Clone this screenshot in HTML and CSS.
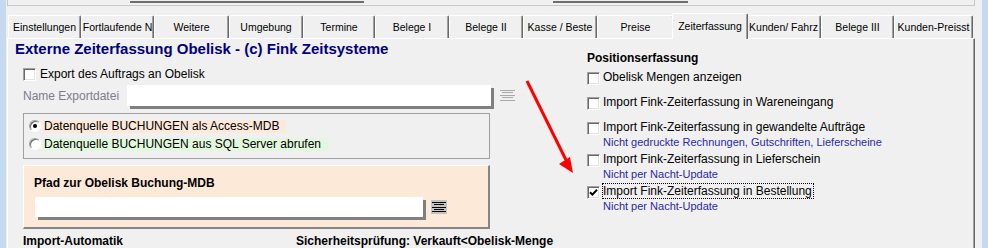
FILE: index.html
```html
<!DOCTYPE html>
<html lang="de">
<head>
    <meta charset="UTF-8">
    <title>Einstellungen - Zeiterfassung</title>
    <link rel="stylesheet" href="styles.css">
</head>
<body>

<div class="app">
    <!-- Reste der Felder oberhalb der Reiter -->
    <div class="topbar">
        <div class="topframe">
            <span class="shadow-bar bar-one"></span>
            <span class="shadow-bar bar-two"></span>
        </div>
    </div>

    <!-- Reiter -->
    <div class="tabs">
        <div class="tab">Einstellungen</div>
        <div class="tab">Fortlaufende N</div>
        <div class="tab">Weitere</div>
        <div class="tab">Umgebung</div>
        <div class="tab">Termine</div>
        <div class="tab">Belege I</div>
        <div class="tab">Belege II</div>
        <div class="tab">Kasse / Beste</div>
        <div class="tab">Preise</div>
        <div class="tab active">Zeiterfassung</div>
        <div class="tab">Kunden/ Fahrz</div>
        <div class="tab">Belege III</div>
        <div class="tab">Kunden-Preisst</div>
    </div>

    <div class="panel">
        <!-- linke Spalte -->
        <div class="left">
            <h1 class="title">Externe Zeiterfassung Obelisk - (c) Fink Zeitsysteme</h1>

            <div class="check-row">
                <span class="check"></span>
                <span>Export des Auftrags an Obelisk</span>
            </div>

            <div class="field-row">
                <span class="field-label">Name Exportdatei</span>
                <span class="field export-field"></span>
                <svg class="list-icon" width="15" height="14" viewBox="0 0 15 14" shape-rendering="crispEdges">
                    <g stroke="#a9a9a9" stroke-width="1">
                        <line x1="0" y1="2.5" x2="15" y2="2.5"/>
                        <line x1="2" y1="4.5" x2="13" y2="4.5"/>
                        <line x1="0" y1="7.5" x2="15" y2="7.5"/>
                        <line x1="2" y1="9.5" x2="13" y2="9.5"/>
                        <line x1="0" y1="12.5" x2="15" y2="12.5"/>
                    </g>
                </svg>
            </div>

            <div class="group">
                <div class="radio-row">
                    <span class="radio checked"></span>
                    <span class="radio-label peach">Datenquelle BUCHUNGEN als Access-MDB</span>
                </div>
                <div class="radio-row">
                    <span class="radio"></span>
                    <span class="radio-label green">Datenquelle BUCHUNGEN aus SQL Server abrufen</span>
                </div>
            </div>

            <div class="path-box">
                <div class="path-title">Pfad zur Obelisk Buchung-MDB</div>
                <div class="path-row">
                    <span class="field path-field"></span>
                    <svg class="list-icon dark" width="16" height="14" viewBox="0 0 16 14" shape-rendering="crispEdges">
                        <rect width="16" height="14" fill="#c2c2c2"/>
                        <g stroke="#000" stroke-width="1">
                            <line x1="1" y1="2.5" x2="15" y2="2.5"/>
                            <line x1="3" y1="4.5" x2="13" y2="4.5"/>
                            <line x1="1" y1="7.5" x2="15" y2="7.5"/>
                            <line x1="3" y1="9.5" x2="13" y2="9.5"/>
                            <line x1="1" y1="11.5" x2="15" y2="11.5"/>
                        </g>
                    </svg>
                </div>
            </div>
        </div>

        <!-- rechte Spalte -->
        <div class="right">
            <div class="heading">Positionserfassung</div>

            <div class="opt">
                <span class="check"></span>
                <div class="opt-text"><span class="opt-label">Obelisk Mengen anzeigen</span></div>
            </div>
            <div class="opt">
                <span class="check"></span>
                <div class="opt-text"><span class="opt-label">Import Fink-Zeiterfassung in Wareneingang</span></div>
            </div>
            <div class="opt with-note">
                <span class="check"></span>
                <div class="opt-text">
                    <span class="opt-label">Import Fink-Zeiterfassung in gewandelte Aufträge</span>
                    <div class="note">Nicht gedruckte Rechnungen, Gutschriften, Lieferscheine</div>
                </div>
            </div>
            <div class="opt with-note">
                <span class="check"></span>
                <div class="opt-text">
                    <span class="opt-label">Import Fink-Zeiterfassung in Lieferschein</span>
                    <div class="note">Nicht per Nacht-Update</div>
                </div>
            </div>
            <div class="opt with-note">
                <span class="check checked">
                    <svg width="9" height="9" viewBox="0 0 9 9">
                        <path d="M1 4.2 L3.4 6.6 L8 1.8" fill="none" stroke="#000" stroke-width="2"/>
                    </svg>
                </span>
                <div class="opt-text">
                    <span class="opt-label focused">Import Fink-Zeiterfassung in Bestellung</span>
                    <div class="note">Nicht per Nacht-Update</div>
                </div>
            </div>
        </div>

        <!-- untere Zeile -->
        <div class="bottom-row">
            <span class="bottom-left">Import-Automatik</span>
            <span>Sicherheitsprüfung: Verkauft&lt;Obelisk-Menge</span>
        </div>
    </div>
</div>

<!-- Markierung (roter Pfeil) -->
<svg class="arrow" width="988" height="248" viewBox="0 0 988 248">
    <line x1="527" y1="81" x2="566" y2="160" stroke="#ff0000" stroke-width="3"/>
    <polygon points="559,164 570,157 573,173" fill="#ff0000"/>
</svg>

</body>
</html>
```

FILE: styles.css
```css
/* Reset */
* {
    margin: 0;
    padding: 0;
    box-sizing: border-box;
}

body {
    position: relative;
    background-color: #c5daf0;
    font-family: "Liberation Sans", Arial, sans-serif;
    font-size: 12px;
    color: #000;
    overflow: hidden;
}

/* Fenster */
.app {
    margin: 0 6px;
    height: 248px;
    background-color: #f0f0f0;
    overflow: hidden;
}

/* Obere Reste */
.topbar {
    height: 8px;
}

.topframe {
    display: flex;
    margin-left: 1px;
    width: 968px;
    height: 6px;
    border: 1px solid #c8c8c8;
    border-top: none;
}

.shadow-bar {
    height: 2px;
    margin-top: 1px;
    background-color: #6d6d6d;
}

.bar-one {
    margin-left: 122px;
    width: 234px;
}

.bar-two {
    margin-left: 189px;
    width: 135px;
}

/* Reiter */
.tabs {
    display: flex;
    align-items: flex-end;
    height: 30px;
    padding-left: 2px;
    position: relative;
    z-index: 2;
}

.tab {
    flex: 0 0 auto;
    width: 74px;
    height: 23px;
    padding-top: 1px;
    line-height: 21px;
    font-size: 10.5px;
    text-align: center;
    white-space: nowrap;
    overflow: hidden;
    background-color: #f0f0f0;
    border-top: 1px solid #fff;
    border-left: 1px solid #fff;
    border-right: 1px solid #696969;
    box-shadow: inset -1px 0 #a0a0a0;
    border-radius: 2px 2px 0 0;
}

.tab:nth-child(1) { width: 73px; }
.tab:nth-child(2) { width: 73px; }
.tab:nth-child(3) { width: 75px; }
.tab:nth-child(5) { width: 72px; }
.tab:nth-child(9) { width: 77px; }
.tab:nth-child(11) { width: 75px; }
.tab:nth-child(12) { width: 73px; }
.tab:nth-child(13) { width: 79px; }

.tab.active {
    width: 76px;
    height: 26px;
    padding-top: 2px;
    margin: 0 -2px -1px;
    position: relative;
    z-index: 3;
}

/* Registerseite */
.panel {
    display: grid;
    grid-template-columns: 475px 1fr;
    column-gap: 97px;
    align-items: start;
    margin-left: 1px;
    width: 968px;
    height: 210px;
    padding: 1px 0 0 7px;
    border-top: 1px solid #fff;
    border-left: 1px solid #fff;
    border-right: 1px solid #696969;
    box-shadow: inset -1px 0 #a0a0a0;
}

.title {
    font-size: 15px;
    line-height: 17px;
    font-weight: bold;
    color: #000080;
}

/* Checkbox (3D) */
.check {
    flex: 0 0 auto;
    display: flex;
    align-items: center;
    justify-content: center;
    width: 13px;
    height: 13px;
    background-color: #fff;
    border: 1px solid;
    border-color: #a0a0a0 #fff #fff #a0a0a0;
    box-shadow: inset 1px 1px #696969, inset -1px -1px #e3e3e3;
}

.check-row {
    display: flex;
    margin: 10px 0 0 8px;
    line-height: 14px;
}

.check-row .check {
    margin: 1px 4px 0 0;
}

/* Eingabefelder */
.field-row {
    display: flex;
    align-items: flex-start;
    height: 24px;
    margin: 4px 0 0 8px;
}

.field-row > * {
    flex: 0 0 auto;
}

.field-label {
    width: 104px;
    padding-top: 1px;
    line-height: 21px;
    color: #7d7d8c;
}

.field {
    display: block;
    background-color: #fff;
    box-shadow: 3px 3px 0 #7f7f7f;
}

.export-field {
    width: 364px;
    height: 21px;
}

.list-icon {
    display: block;
    margin: 3px 0 0 9px;
}

.list-icon.dark {
    margin-left: 8px;
}

/* Optionsgruppe */
.group {
    width: 467px;
    margin: 4px 0 0 8px;
    padding: 6px 0 7px 5px;
    border: 1px solid #a0a0a0;
}

.radio-row {
    display: flex;
    height: 13px;
}

.radio-row + .radio-row {
    margin-top: 5px;
}

.radio {
    position: relative;
    flex: 0 0 auto;
    width: 12px;
    height: 12px;
    margin-right: 2px;
    border-radius: 50%;
    background-color: #fff;
    border: 1px solid;
    border-color: #a0a0a0 #fff #fff #a0a0a0;
    box-shadow: inset 1px 1px #696969;
}

.radio.checked::after {
    content: "";
    position: absolute;
    left: 3px;
    top: 3px;
    width: 4px;
    height: 4px;
    border-radius: 50%;
    background-color: #000;
}

.radio-label {
    line-height: 13px;
    padding: 0 7px 0 1px;
}

.peach {
    background-color: #fde9d9;
}

.green {
    background-color: #e2f8dc;
}

/* Pfad-Box */
.path-box {
    width: 467px;
    height: 64px;
    margin: 6px 0 0 8px;
    padding: 10px 0 0 10px;
    background-color: #fde9d8;
    border-top: 1px solid #fff;
    border-left: 1px solid #fff;
    border-right: 2px solid #858585;
    border-bottom: 2px solid #858585;
}

.path-title {
    font-weight: bold;
    line-height: 14px;
}

.path-row {
    display: flex;
    align-items: flex-start;
    margin-top: 7px;
    padding-left: 1px;
}

.path-row > * {
    flex: 0 0 auto;
}

.path-field {
    width: 388px;
    height: 20px;
}

/* Rechte Spalte */
.right {
    padding-top: 11px;
}

.heading {
    font-weight: bold;
    line-height: 14px;
    margin-bottom: 5px;
}

.opt {
    display: flex;
    align-items: flex-start;
    margin-bottom: 10px;
}

.opt.with-note {
    margin-bottom: 4px;
}

.opt .check {
    margin: 2px 3px 0 0;
}

.opt-label {
    display: inline-block;
    line-height: 14px;
    padding-right: 1px;
}

.opt-label.focused {
    outline: 1px dotted #000;
}

.note {
    margin-top: 2px;
    font-size: 11px;
    line-height: 12px;
    color: #2a2aa6;
}

/* Untere Zeile */
.bottom-row {
    grid-column: 1 / -1;
    display: flex;
    margin: 4px 0 0 8px;
    font-weight: bold;
    line-height: 14px;
}

.bottom-left {
    width: 273px;
}

/* Roter Pfeil */
.arrow {
    position: absolute;
    left: 0;
    top: 0;
    pointer-events: none;
}
```
